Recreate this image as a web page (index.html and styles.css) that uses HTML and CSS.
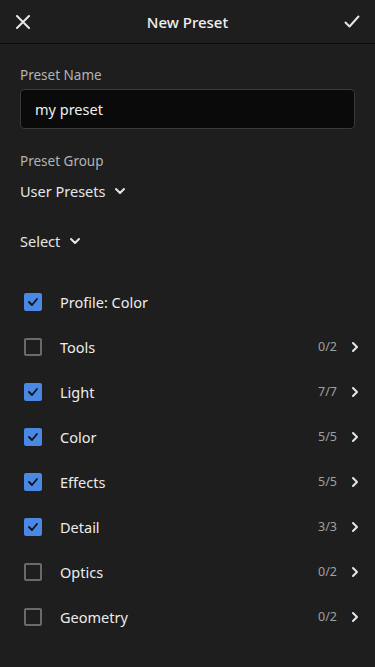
FILE: index.html
```
<!doctype html>
<html>
  <head>
    <meta name="viewport" content="width=device-width, initial-scale=1">
    <meta charset="utf-8">
    <title>New Preset</title>
    <link rel="stylesheet" href="styles.css">
  </head>
  <body>
    <div class="topbar">
      <span class="icon">
        <svg width="14" height="14" viewBox="0 0 14 14"><path d="M1 1L13 13M13 1L1 13" stroke="#e6e6e6" stroke-width="2" stroke-linecap="round"/></svg>
      </span>
      <h1>New Preset</h1>
      <span class="icon">
        <svg width="16" height="14" viewBox="0 0 16 14"><path d="M1.5 7.5L5.5 11.5L14.5 1.5" stroke="#e6e6e6" stroke-width="2" fill="none" stroke-linecap="round" stroke-linejoin="round"/></svg>
      </span>
    </div>
    <div class="form">
      <label class="field-label">Preset Name</label>
      <div class="input">my preset</div>
      <label class="field-label group-label">Preset Group</label>
      <div class="dropdown">User Presets <svg class="chev" width="12" height="8" viewBox="0 0 12 8"><path d="M2 2L6 6L10 2" stroke="#e6e6e6" stroke-width="2" fill="none" stroke-linecap="round" stroke-linejoin="round"/></svg></div>
      <div class="dropdown select">Select <svg class="chev" width="12" height="8" viewBox="0 0 12 8"><path d="M2 2L6 6L10 2" stroke="#e6e6e6" stroke-width="2" fill="none" stroke-linecap="round" stroke-linejoin="round"/></svg></div>
    </div>
    <ul id="settings" class="settings"></ul>
    <script>
    const ITEMS = [
      ['Profile: Color', true, null],
      ['Tools', false, '0/2'],
      ['Light', true, '7/7'],
      ['Color', true, '5/5'],
      ['Effects', true, '5/5'],
      ['Detail', true, '3/3'],
      ['Optics', false, '0/2'],
      ['Geometry', false, '0/2']
    ];
    const ul = document.getElementById('settings')
    ITEMS.map(([name, on, count]) => {
      const li = document.createElement('li');
      let html = '<span class="box' + (on ? ' checked' : '') + '">'
      if (on) html += '<svg width="12" height="10" viewBox="0 0 12 10"><path d="M2 5L5 8L10 2" stroke="#111" stroke-width="1.8" fill="none" stroke-linecap="round" stroke-linejoin="round"/></svg>'
      html += '</span><span class="name">' + name + '</span>'
      if (count) {
        html += '<span class="count">' + count + '</span>'
        html += '<svg class="arrow" width="8" height="12" viewBox="0 0 8 12"><path d="M2 2L6 6L2 10" stroke="#e6e6e6" stroke-width="2" fill="none" stroke-linecap="round" stroke-linejoin="round"/></svg>'
      }
      li.innerHTML = html
      ul.appendChild(li)
    })
    </script>
  </body>
</html>
```

FILE: styles.css
```
body {
    margin: 0;
    background: #1e1e1e;
    color: #e6e6e6;
    font-family: "Noto Sans", sans-serif;
    font-size: 14px;
}
.topbar {
    height: 44px;
    display: flex;
    align-items: center;
    justify-content: space-between;
    padding: 0 15px;
    border-bottom: 1px solid #0b0b0b;
    box-sizing: border-box;
}
.topbar h1 {
    font-size: 15px;
    font-weight: 500;
    margin: 0;
    color: #f0f0f0;
}
.topbar .icon {
    width: 16px;
    display: flex;
    justify-content: center;
}
.form {
    padding: 22px 20px 0 20px;
}
.field-label {
    display: block;
    color: #b3b3b3;
    font-size: 13.5px;
    line-height: 18px;
}
.input {
    margin-top: 5px;
    height: 40px;
    box-sizing: border-box;
    background: #0a0a0a;
    border: 1px solid #3a3a3a;
    border-radius: 4px;
    padding: 0 14px;
    display: flex;
    align-items: center;
    font-size: 14.5px;
    color: #f0f0f0;
}
.group-label {
    margin-top: 23px;
}
.dropdown {
    margin-top: 11px;
    font-size: 14.5px;
    display: flex;
    align-items: center;
    gap: 9px;
    line-height: 20px;
}
.dropdown.select {
    margin-top: 30px;
}
.settings {
    list-style-type: none;
    margin: 28px 0 0 0;
    padding: 0 16px 0 24px;
}
.settings li {
    height: 45px;
    display: flex;
    align-items: center;
}
.box {
    width: 18px;
    height: 18px;
    box-sizing: border-box;
    border: 2px solid #6a6a6a;
    border-radius: 2px;
    display: flex;
    align-items: center;
    justify-content: center;
}
.box.checked {
    background: #4a88e6;
    border: none;
}
.name {
    margin-left: 18px;
    flex: 1;
    font-size: 14.5px;
    color: #ececec;
}
.count {
    font-size: 12.5px;
    color: #a0a0a0;
    margin-right: 14px;
}
```
